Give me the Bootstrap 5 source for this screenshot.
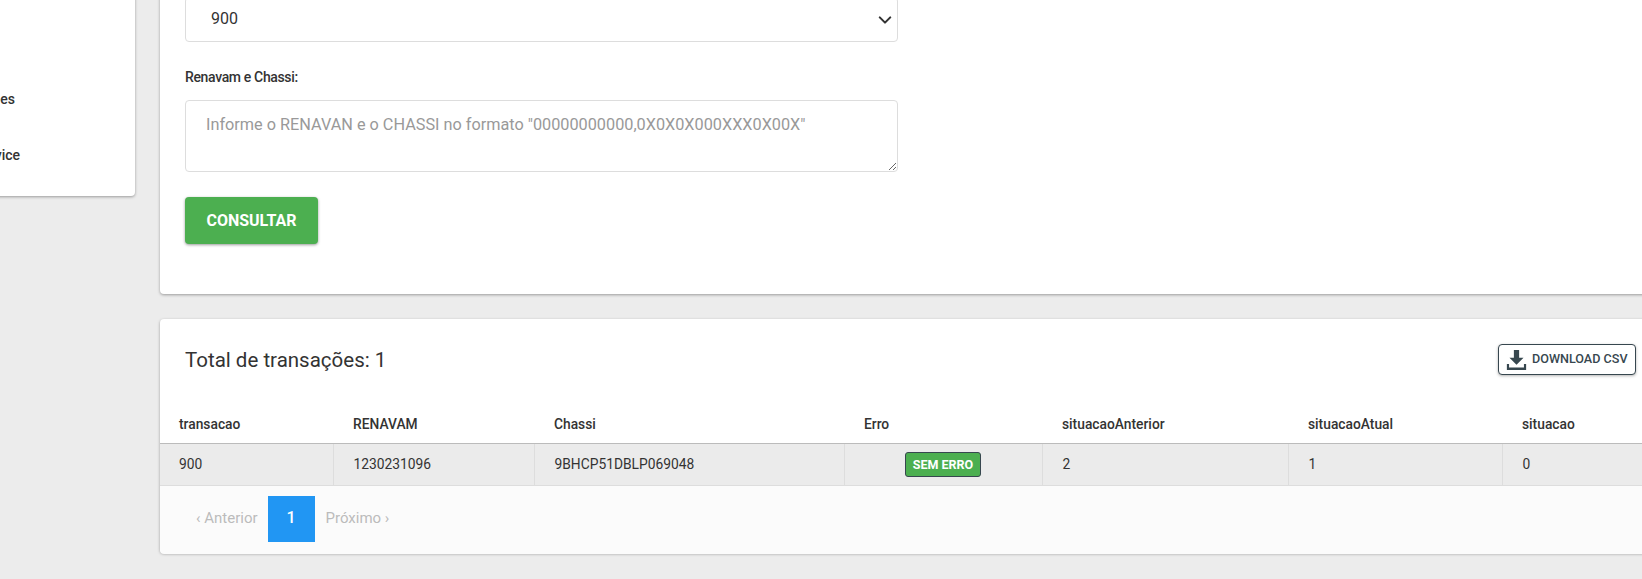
<!DOCTYPE html>
<html lang="pt-BR">
<head>
<meta charset="utf-8">
<title>Consulta</title>
<link href="https://cdn.jsdelivr.net/npm/bootstrap@5.3.0/dist/css/bootstrap.min.css" rel="stylesheet">
<style>
html,body{height:579px;overflow:hidden}
body{background:#ececec;font-family:Roboto,"Liberation Sans",sans-serif;color:#333;font-size:14px}
.stage{margin-top:-26px;margin-left:-120px;width:1820px;gap:25px}
.side-panel{width:255px;height:222px;flex:none;background:#fff;border-radius:0 0 4px 4px;box-shadow:0 1px 3px rgba(0,0,0,.35);padding-top:115px}
.side-item{display:block;height:56px;line-height:20px;text-align:right;font-size:14px;font-weight:500;color:#333;text-decoration:none;white-space:nowrap}
.side-item.one{padding-right:120px}
.side-item.two{padding-right:115px}
.main-col{width:1540px;flex:none;gap:25px}
.panel-box{background:#fff;border-radius:4px;box-shadow:0 1px 3px rgba(0,0,0,.35)}
.form-box{height:320px;padding:23px 25px 0}
.form-select.fld{width:713px;height:45px;border:1px solid #ddd;border-radius:4px;font-size:16px;color:#333;padding:5px 25px 7px;box-shadow:none;background-size:18px 14px;background-position:right 3px center;background-image:url("data:image/svg+xml,%3csvg xmlns='http://www.w3.org/2000/svg' viewBox='0 0 16 16'%3e%3cpath fill='none' stroke='%23333' stroke-linecap='round' stroke-linejoin='round' stroke-width='2.4' d='m2 5 6 6 6-6'/%3e%3c/svg%3e")}
.fld-label{font-size:14px;letter-spacing:-.35px;font-weight:500;margin:25px 0 13px;line-height:20px;color:#333;display:block}
.form-control.fld-area{width:713px;height:72px;border:1px solid #ddd;border-radius:4px;font-size:16.25px;padding:12px 20px;color:#333;box-shadow:none}
.form-control.fld-area::placeholder{color:#999;opacity:1}
.btn-go{margin-top:25px;width:133px;height:47px;padding:7px 0;background:#4caf50;border:0;border-radius:4px;color:#fff;font-weight:700;font-size:16px;box-shadow:0 1px 3px rgba(0,0,0,.4)}
.result-box{height:234px}
.result-top{height:95px;padding:26px 0 0 25px}
.result-title{flex:none;width:1313px;font-size:20.5px;font-weight:400;margin:0;line-height:30px;color:#333}
.btn-csv{flex:none;margin-top:-1px;width:138px;height:31px;padding:0 0 0 7px;background:#fff;border:1px solid #37474f;border-radius:4px;color:#37474f;font-size:12.6px;font-weight:500;box-shadow:0 1px 3px rgba(0,0,0,.3);gap:5px;white-space:nowrap}
.btn-csv svg{flex:none}
.grid-table{table-layout:fixed;width:1540px;margin:0;font-size:13.8px;border-collapse:collapse}
.grid-table th{font-weight:500;padding:0 20px 9px;height:19px;line-height:20px;border-bottom:1px solid #bbb;border-top:0;color:#333;background:transparent;box-shadow:none}
.grid-table td{background:#ebebeb;padding:0 20px;height:42px;vertical-align:middle;border-bottom:1px solid #ddd;border-right:1px solid #ddd;color:#333;box-shadow:none}
.grid-table th:first-child,.grid-table td:first-child{padding-left:19px}
.grid-table td:last-child{border-right:0}
.tag-ok{display:inline-block;background:#4caf50;color:#fff;font-weight:700;font-size:12.5px;line-height:23px;padding:0 7px;border:1px solid #37474f;border-radius:3px}
.pager-bar{height:68px;background:#fbfbfb;border-radius:0 0 4px 4px;padding:10px 0 0 25px}
.pager-item{height:46px;line-height:44px;padding:0 10px 0 11px;font-size:15px;color:#bbb}
.pager-item.on{background:#2196f3;color:#fff;width:47px;padding:0;text-align:center;font-weight:500;font-size:16px}
</style>
</head>
<body>
<div class="d-flex stage">
  <aside class="side-panel">
    <a class="side-item one" href="#">Transações</a>
    <a class="side-item two" href="#">Web Service</a>
  </aside>
  <main class="main-col d-flex flex-column">
    <section class="panel-box form-box">
      <select class="form-select fld"><option>900</option></select>
      <label class="fld-label">Renavam e Chassi:</label>
      <textarea class="form-control fld-area" placeholder="Informe o RENAVAN e o CHASSI no formato &quot;00000000000,0X0X0X000XXX0X00X&quot;"></textarea>
      <button class="btn btn-go d-block" type="button">CONSULTAR</button>
    </section>
    <section class="panel-box result-box">
      <div class="result-top d-flex align-items-start">
        <h5 class="result-title">Total de transações: 1</h5>
        <button class="btn btn-csv d-flex align-items-center" type="button">
          <svg width="21" height="21" viewBox="0 0 24 24" fill="#37474f" aria-hidden="true"><path d="M9 1h6v9h5l-8 8-8-8h5z"/><path d="M1 17h2.500v4h17v-4H23v7H1z"/></svg>
          <span>DOWNLOAD CSV</span>
        </button>
      </div>
      <table class="table grid-table">
        <colgroup><col style="width:173px"><col style="width:201px"><col style="width:310px"><col style="width:198px"><col style="width:246px"><col style="width:214px"><col></colgroup>
        <thead><tr><th>transacao</th><th>RENAVAM</th><th>Chassi</th><th>Erro</th><th>situacaoAnterior</th><th>situacaoAtual</th><th>situacao</th></tr></thead>
        <tbody><tr><td>900</td><td>1230231096</td><td>9BHCP51DBLP069048</td><td class="text-center"><span class="tag-ok">SEM ERRO</span></td><td>2</td><td>1</td><td>0</td></tr></tbody>
      </table>
      <div class="pager-bar d-flex"><span class="pager-item">‹ Anterior</span><span class="pager-item on">1</span><span class="pager-item">Próximo ›</span></div>
    </section>
  </main>
</div>
</body>
</html>
